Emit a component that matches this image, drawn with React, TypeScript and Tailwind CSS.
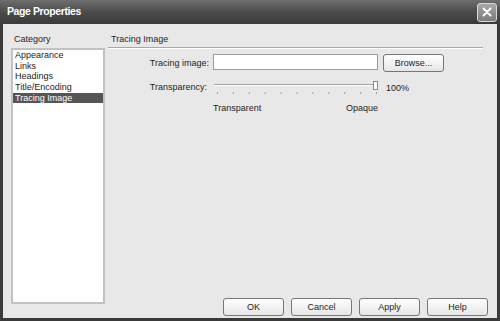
const categories = ["Appearance", "Links", "Headings", "Title/Encoding", "Tracing Image"];

function Button({ label, className = "" }: { label: string; className?: string }) {
  return (
    <button
      className={
        "h-[18px] w-[61px] rounded-[3px] border border-[#767676] bg-gradient-to-b from-white to-[#e6e6e6] text-[9px] leading-none text-[#1e1e1e] " +
        className
      }
    >
      {label}
    </button>
  );
}

function Slider() {
  const ticks = Array.from({ length: 11 }, (_, i) => 4 + i * 15.9);
  return (
    <svg width="166" height="20" viewBox="0 0 166 20">
      <line x1="1" y1="6.5" x2="164" y2="6.5" stroke="#a4a4a4" strokeWidth="1" />
      <line x1="1" y1="7.5" x2="164" y2="7.5" stroke="#ffffff" strokeWidth="1" />
      {ticks.map((x, i) => (
        <rect key={i} x={x} y="14" width="1" height="2" fill="#a0a0a0" />
      ))}
      <rect x="160.5" y="3.5" width="4" height="8" fill="#ffffff" stroke="#8a8a8a" strokeWidth="1" />
    </svg>
  );
}

export default function App() {
  return (
    <div
      className="flex h-[321px] w-[500px] flex-col overflow-hidden bg-[#e8e8e8] text-[9px] text-[#1e1e1e]"
      style={{ fontFamily: '"Liberation Sans", Arial, sans-serif' }}
    >
      {/* Title bar */}
      <div className="flex h-[24px] shrink-0 items-center justify-between bg-gradient-to-b from-[#6e6e6e] via-[#4c4c4c] to-[#3a3a3a] pl-[7px] pr-[3px]">
        <span className="text-[10.5px] font-bold tracking-[-0.4px] text-white">Page Properties</span>
        <div className="flex h-[19px] w-[20px] items-center justify-center rounded-[3px] border border-[#d8d8d8] bg-gradient-to-b from-[#a8a8a8] to-[#7c7c7c]">
          <svg width="10" height="10" viewBox="0 0 10 10">
            <path d="M1.5 1.5 L8.5 8.5 M8.5 1.5 L1.5 8.5" stroke="#ffffff" strokeWidth="2" strokeLinecap="round" />
          </svg>
        </div>
      </div>

      {/* Body */}
      <div className="flex flex-1 border-x-[3px] border-b-[3px] border-[#3a3a3a] pb-[2px]">
        {/* Category column */}
        <div className="flex w-[102px] shrink-0 flex-col pl-[8px] pt-[9px]">
          <div className="pl-[3px] leading-[12px]">Category</div>
          <div className="mt-[3px] h-[256px] w-[94px] border-2 border-[#c2c2c2] bg-white">
            {categories.map((c) => (
              <div
                key={c}
                className={
                  "h-[10.7px] pl-[2px] leading-[10.7px] " +
                  (c === "Tracing Image" ? "bg-[#555555] text-white" : "")
                }
              >
                {c}
              </div>
            ))}
          </div>
        </div>

        {/* Panel */}
        <div className="flex flex-1 flex-col pl-[3px] pt-[9px]">
          <div className="pl-[3px] leading-[12px]">Tracing Image</div>
          <div className="mr-[14px] mt-[2px] border-t border-b border-t-[#a8a8a8] border-b-white" />

          <div className="mt-[5px] flex items-start">
            <div className="mt-[3px] w-[101px] text-right leading-[12px]">Tracing image:</div>
            <div className="ml-[4px] h-[16px] w-[165px] border border-[#9a9a9a] bg-white" />
            <Button label="Browse..." className="ml-[5px] w-[60px]" />
          </div>

          <div className="mt-[6px] flex items-start">
            <div className="mt-[3px] w-[99px] text-right leading-[12px]">Transparency:</div>
            <div className="ml-[6px]">
              <Slider />
            </div>
            <div className="ml-[7px] mt-[4px] leading-[12px]">100%</div>
          </div>

          <div className="ml-[105px] mt-[4px] flex w-[165px] justify-between leading-[12px]">
            <span>Transparent</span>
            <span>Opaque</span>
          </div>

          <div className="mt-auto flex justify-end gap-[7px] pr-[9px]">
            <Button label="OK" />
            <Button label="Cancel" />
            <Button label="Apply" />
            <Button label="Help" />
          </div>
        </div>
      </div>
    </div>
  );
}
